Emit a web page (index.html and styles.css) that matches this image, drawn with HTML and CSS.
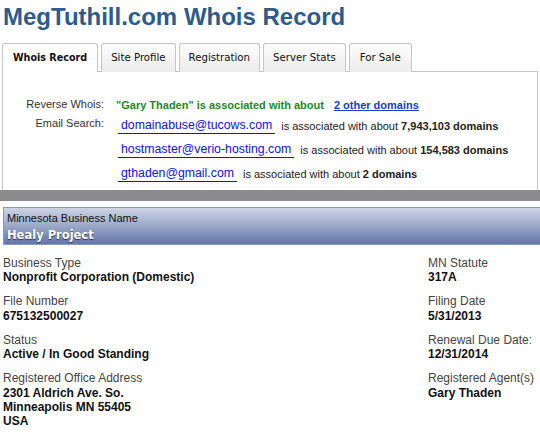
FILE: index.html
```
<!DOCTYPE html>
<html>
<head>
<meta charset="utf-8">
<link rel="stylesheet" href="styles.css">
</head>
<body>
<h1 class="title">MegTuthill.com Whois Record</h1>
<div class="tabs">
  <div class="tab active">Whois Record</div>
  <div class="tab">Site Profile</div>
  <div class="tab">Registration</div>
  <div class="tab">Server Stats</div>
  <div class="tab">For Sale</div>
</div>
<div class="panel">
  <div class="rows">
    <div class="label rev">Reverse Whois:</div>
    <div class="rev-val"><span class="green">"Gary Thaden" is associated with about</span><a class="more" href="#">2 other domains</a></div>
    <div class="label email">Email Search:</div>
    <div class="email-val"><a class="mail" href="#">domainabuse@tucows.com</a><span class="assoc">is associated with about <b>7,943,103 domains</b></span></div>
    <div class="label email"></div>
    <div class="email-val"><a class="mail" href="#">hostmaster@verio-hosting.com</a><span class="assoc">is associated with about <b>154,583 domains</b></span></div>
    <div class="label email"></div>
    <div class="email-val"><a class="mail" href="#">gthaden@gmail.com</a><span class="assoc">is associated with about <b>2 domains</b></span></div>
  </div>
</div>
<div class="graybar"></div>
<div class="bizhead">
  <div class="bizlabel">Minnesota Business Name</div>
  <div class="bizname">Healy Project</div>
</div>
<div class="details">
  <div class="group"><div class="dl">Business Type</div><div class="dv">Nonprofit Corporation (Domestic)</div></div>
  <div class="group"><div class="dl">MN Statute</div><div class="dv">317A</div></div>
  <div class="group"><div class="dl">File Number</div><div class="dv">675132500027</div></div>
  <div class="group"><div class="dl">Filing Date</div><div class="dv">5/31/2013</div></div>
  <div class="group"><div class="dl">Status</div><div class="dv">Active / In Good Standing</div></div>
  <div class="group"><div class="dl">Renewal Due Date:</div><div class="dv">12/31/2014</div></div>
  <div class="group"><div class="dl">Registered Office Address</div><div class="dv">2301 Aldrich Ave. So.<br>Minneapolis MN 55405<br>USA</div></div>
  <div class="group"><div class="dl">Registered Agent(s)</div><div class="dv">Gary Thaden</div></div>
</div>
</body>
</html>
```
FILE: styles.css
```
html, body {
  margin: 0;
  padding: 0;
  background: #fff;
  font-family: "Liberation Sans", Arial, sans-serif;
  overflow: hidden;
}
.title {
  margin: 0;
  padding: 3px 0 0 3px;
  font-size: 24px;
  line-height: 28px;
  font-weight: bold;
  color: #2f5b8c;
}
.tabs {
  display: flex;
  gap: 3px;
  margin: 12px 0 0 2px;
  position: relative;
  z-index: 1;
}
.tab {
  box-sizing: border-box;
  height: 29px;
  padding: 0 9px;
  border: 1px solid #c6c6c6;
  border-bottom: none;
  border-radius: 3px 3px 0 0;
  background: linear-gradient(#fdfdfd, #ececec);
  font-family: "DejaVu Sans", Verdana, sans-serif;
  font-size: 10.2px;
  line-height: 27px;
  color: #111;
  margin-bottom: -1px;
}
.tab.active {
  background: #fff;
  font-weight: bold;
  font-size: 9.6px;
  padding: 0 10px;
}
.tab:last-child {
  padding: 0 10px;
}
.panel {
  box-sizing: border-box;
  height: 119px;
  margin: 0 2px;
  border: 1px solid #c6c6c6;
  border-bottom: none;
  padding-top: 23px;
}
.rows {
  display: grid;
  grid-template-columns: 101px 1fr;
  column-gap: 12px;
}
.label {
  text-align: right;
  font-size: 11px;
  color: #333;
}
.rev, .rev-val {
  line-height: 18px;
  margin-bottom: -1px;
}
.email, .email-val {
  line-height: 24px;
  height: 24px;
}
.email {
  line-height: 21px;
}
.green {
  font-size: 11px;
  font-weight: bold;
  color: #228a22;
}
.more {
  margin-left: 10px;
  font-size: 11px;
  font-weight: bold;
  color: #1c3ccc;
}
.mail {
  display: inline-block;
  margin-left: 2px;
  padding: 0 3px;
  font-size: 12.3px;
  line-height: 15px;
  color: #1010f0;
  text-decoration: none;
  border-bottom: 1px solid #1010f0;
  vertical-align: middle;
}
.assoc {
  margin-left: 6px;
  font-size: 11px;
  color: #222;
  vertical-align: middle;
}
.assoc b {
  color: #222;
}
.graybar {
  height: 11px;
  background: #8c8c8c;
}
.bizhead {
  margin: 6px 0 0 3px;
  border: 1px solid #8a9abf;
  border-right: none;
  padding: 2px 0 1px 3px;
  background: linear-gradient(#ced4e4, #9aa8c8 50%, #6376a8);
}
.bizlabel {
  font-size: 11px;
  line-height: 17px;
  color: #111;
}
.bizname {
  font-family: "DejaVu Sans", Verdana, sans-serif;
  font-size: 11.5px;
  font-weight: bold;
  line-height: 16px;
  color: #fff;
  text-shadow: 0 1px 1px rgba(0, 0, 0, 0.6);
}
.details {
  display: grid;
  grid-template-columns: 425px 1fr;
  row-gap: 10px;
  margin-top: 11px;
  padding-left: 3px;
}
.dl {
  font-size: 12px;
  line-height: 14.4px;
  color: #444;
}
.dv {
  font-size: 12px;
  line-height: 14px;
  font-weight: bold;
  color: #111;
}
```
